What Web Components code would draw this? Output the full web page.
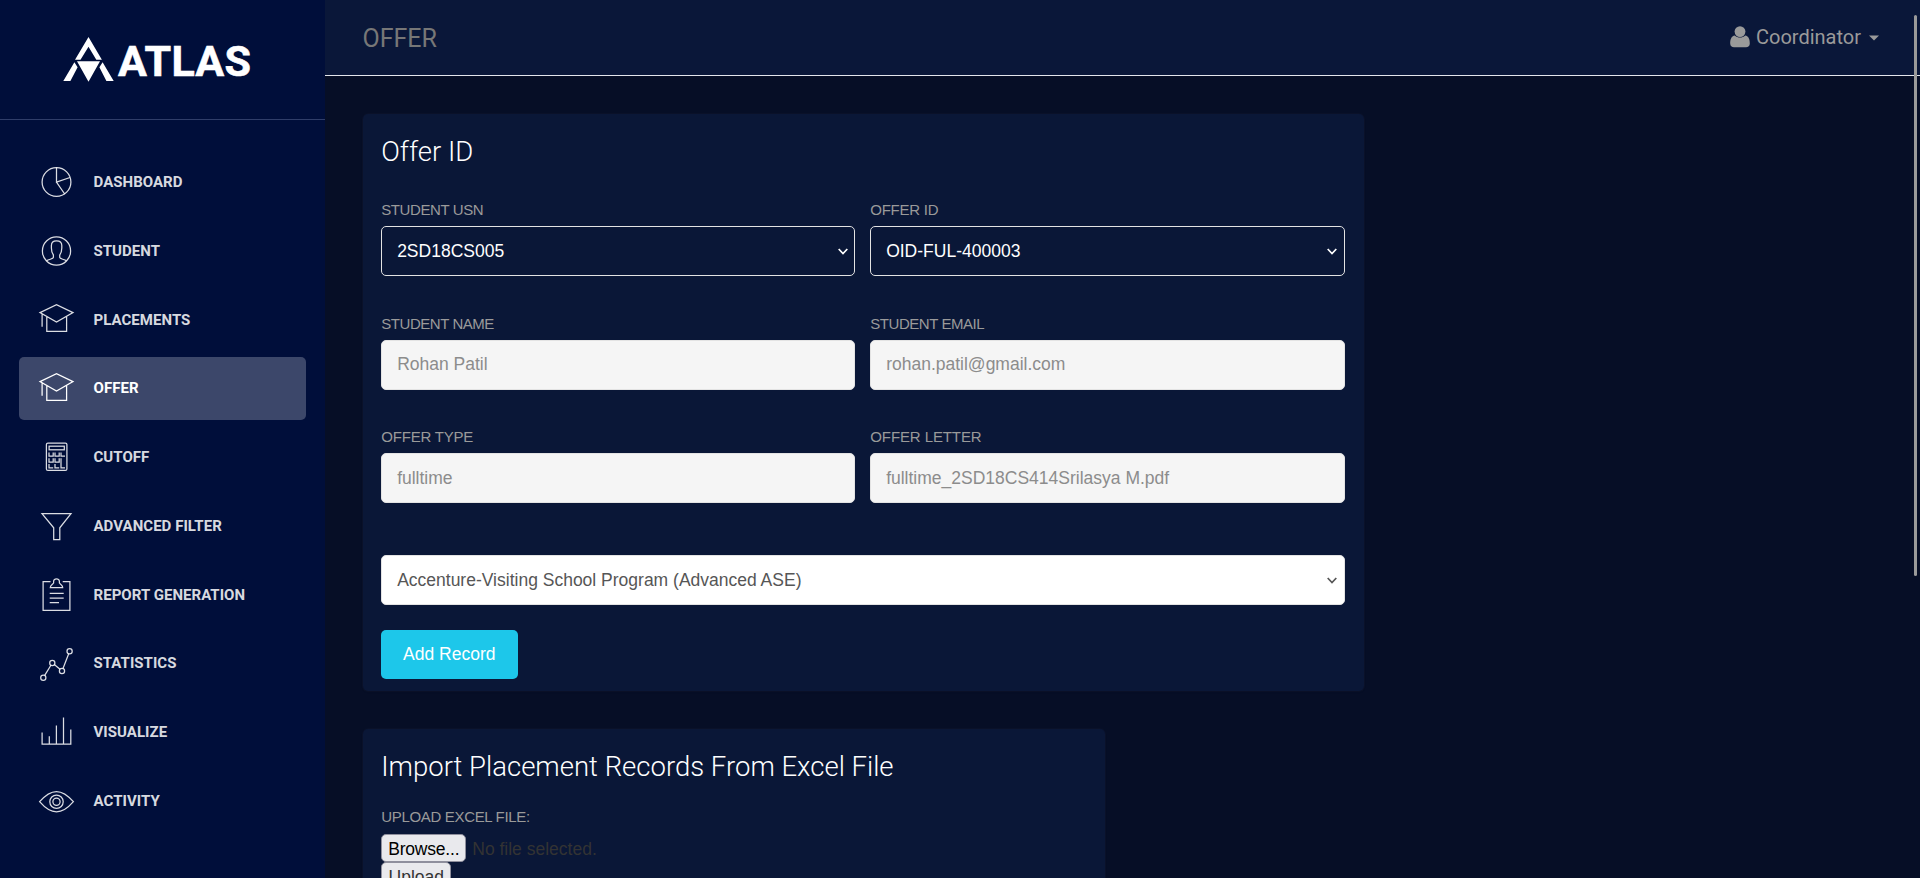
<!DOCTYPE html>
<html lang="en">
<head>
<meta charset="utf-8">
<title>Atlas - Offer</title>
<style>
html,body{margin:0;height:100%;overflow:hidden;background:#060e26}
body{font-family:Roboto,"Liberation Sans",sans-serif;font-size:17.5px;color:#333}
</style>
</head>
<body>
<atlas-app></atlas-app>
<script>
const define = (name, html, setup) => customElements.define(name, class extends HTMLElement {
  constructor() {
    super();
    const t = document.createElement('template');
    t.innerHTML = html;
    this.attachShadow({mode: 'open'}).append(t.content.cloneNode(true));
  }
  connectedCallback() { if (setup) setup(this, this.shadowRoot); }
});

const cap = '<path d="M2 10.6 18.5 2.7 35 10.6 18.5 20Z M4.1 11.6V24.8 M8.8 14.2V29.3H28.6V14.2"/>';
const icons = {
  pie: '<circle cx="18.5" cy="18" r="14.4"/><path d="M18.5 3.6V18.2L32 13.5 M18.5 18.2 26.7 30"/>',
  user: '<circle cx="18.5" cy="18" r="14.1"/><path d="M8.5 27.8C11 26 15.3 26.2 15.4 24.4V22C13.8 20 13.4 17.4 13.4 15V12.5C13.4 9.4 15.3 7.9 18.5 7.9S23.8 9.4 23.8 12.5V15C23.8 17.4 23.2 20 21.7 22V24.4C21.8 26.2 26 26 28.5 27.8"/>',
  cap,
  calc: '<rect x="8.4" y="4" width="20.5" height="27.4" rx="1.5"/><rect x="11.1" y="7.2" width="15.2" height="3.6"/><path d="M11 13.5V17.2H15.2V13.5 M17 13.5V17.2H21.2V13.5 M23 13.5V17.2H27 M11 19.3V23H15.2V19.3 M17 19.3V23H21.2V19.3 M11 25V28.8H15.2 M17 25V28.8H21.2 M23 19.3V28.8H27"/>',
  funnel: '<path d="M4 5.6H33L21.8 19.8V31.5H15.7V19.8Z"/>',
  clip: '<path d="M12.5 4.7H5.1V33.3H31.9V4.7H24.7 M12.3 10.5H24.7C24.7 8 22.5 7.7 21.4 6V4.6C21.4 1 15.6 1 15.6 4.6V6C14.5 7.7 12.3 8 12.3 10.5Z M11.7 16.4H25.7 M11.7 21H25.7 M11.7 25.6H21"/>',
  line: '<circle cx="5.3" cy="31.7" r="2.6"/><circle cx="14.3" cy="16.9" r="2.6"/><circle cx="24" cy="24.9" r="2.6"/><circle cx="31.6" cy="5.3" r="2.6"/><path d="M6.7 29.4 12.9 19.2 M16.3 18.6 22 23.2 M25 22.4 30.7 7.8"/>',
  bars: '<path d="M4.1 18.4V30H32.8V15.6 M11.3 22.2V30 M18.4 11.5V30 M25.5 3.5V30"/>',
  eye: '<path d="M1.6 18.7C8 11.3 13 8.5 18.5 8.5S29 11.3 35.4 18.7C29 26.1 24 28.9 18.5 28.9S8 26.1 1.6 18.7Z"/><circle cx="18.5" cy="18.7" r="6.7"/><circle cx="18.5" cy="18.7" r="3.6"/>'
};

define('atlas-logo', `<style>
:host{display:flex;height:120px;box-sizing:border-box;padding-left:63px;padding-top:37px;border-bottom:1px solid #2f3d69;align-items:flex-start;color:#fff}
svg{width:51px;height:46px;flex:none}
span{font:700 43px/48px Roboto,sans-serif;margin-left:4px;letter-spacing:.25px;-webkit-text-stroke:.6px #fff}
</style><svg viewBox="0 0 51 46" fill="#fff"><path fill-rule="evenodd" d="M25.5 0 38.9 22.7H33.3L25.5 9.8 17.5 22.7H12Z M14 24.3H37L25.5 44.8Z M11.4 25.2 14.6 30.2 7.4 43.9H.3Z M39.6 25.2 36.4 30.2 43.4 43.9H50.7Z"/></svg><span>ATLAS</span>`);

define('nav-item', `<style>
:host{display:flex;align-items:center;box-sizing:border-box;height:62.5px;margin:6.25px 18.75px 0;padding:1.8px 0 0 18.75px;border-radius:5px;color:rgba(255,255,255,.86);font:700 15px/37.5px Roboto,sans-serif;letter-spacing:.04px;text-transform:uppercase}
:host([active]){background:#3c476a;color:#fff}
svg{width:37px;height:37px;margin-right:19px;fill:none;stroke:currentColor;stroke-width:1.25}
</style><svg viewBox="0 0 37 37"></svg><slot></slot>`, (el, r) => r.querySelector('svg').innerHTML = icons[el.getAttribute('icon')]);

define('side-bar', `<style>
:host{display:block;width:325px;flex:none;background:#000e3a}
nav{display:block;padding-top:24.6px}
</style><atlas-logo></atlas-logo><nav>
<nav-item icon="pie">Dashboard</nav-item><nav-item icon="user">Student</nav-item><nav-item icon="cap">Placements</nav-item><nav-item icon="cap" active>Offer</nav-item><nav-item icon="calc">Cutoff</nav-item><nav-item icon="funnel">Advanced Filter</nav-item><nav-item icon="clip">Report Generation</nav-item><nav-item icon="line">Statistics</nav-item><nav-item icon="bars">Visualize</nav-item><nav-item icon="eye">Activity</nav-item></nav>`);

define('top-bar', `<style>
:host{display:flex;justify-content:space-between;align-items:center;box-sizing:border-box;height:76px;padding:0 41px 0 37.5px;border-bottom:1px solid #e3e5ec;background:#0a1739}
.t{font:400 25px/30px Roboto,sans-serif;color:#777;padding-top:2px}
.u{display:flex;align-items:center;font:400 20px/30px Roboto,sans-serif;color:#9a9a9a;margin-top:-2px}
.p{width:20px;height:22px;margin-right:6px;fill:#9a9a9a}
.c{width:10px;height:6px;margin-left:8px;margin-top:3px;fill:#9a9a9a}
</style><span class="t">OFFER</span><div class="u"><svg class="p" viewBox="0 0 20 22"><circle cx="10" cy="5.6" r="5.4"/><path d="M4.9 9.5C1 10 .2 14 .2 17.5.2 20 1.8 21.3 4 21.3H16C18.2 21.3 19.8 20 19.8 17.5 19.8 14 19 10 15.1 9.5 12.5 12.2 7.5 12.2 4.9 9.5Z"/></svg><span>Coordinator</span><svg class="c" viewBox="0 0 10 6"><path d="M0 .5H10L5 5.5Z"/></svg></div>`);

define('form-field', `<style>
:host{display:block;min-width:0}
label{display:block;font:400 15px/21px "Liberation Sans",Arial,sans-serif;color:#9a9a9a;text-transform:uppercase;margin-bottom:6px;height:21px;letter-spacing:var(--track,-.4px)}
:host([nolabel]) label{display:none}
.b{display:flex;align-items:center;justify-content:space-between;box-sizing:border-box;height:50px;padding:0 6.5px 0 14.9px;border:1px solid #e3e3e3;border-radius:5px;background:#f5f5f5;color:#8c8c8c;font:400 17.5px/25px "Liberation Sans",Arial,sans-serif}
:host([dark]) .b{background:transparent;color:#fff}
:host([light]) .b{background:#fff;color:#565656}
svg{display:none;width:10px;height:7px;fill:none;stroke:currentColor;stroke-width:1.7}
:host([dark]) svg,:host([light]) svg{display:block}
</style><label></label><div class="b"><slot></slot><svg viewBox="0 0 10 7"><path d="M.7 1 5 5.5 9.3 1"/></svg></div>`, (el, r) => r.querySelector('label').textContent = el.getAttribute('label') || '');

define('form-card', `<style>
:host{display:block;box-sizing:border-box;background:#0a1737;border-radius:5px;box-shadow:0 0 0 1px rgba(20,27,50,.35),0 1px 2px rgba(0,0,0,.1);padding:18.75px}
h4{margin:0;font:300 27.5px/37px Roboto,sans-serif;color:#fff}
</style><h4></h4><slot></slot>`, (el, r) => r.querySelector('h4').textContent = el.getAttribute('heading'));

define('action-button', `<style>
:host{display:flex;width:137px;height:49px;align-items:center;justify-content:center;border-radius:5px;background:#1dc7ea;color:#fff;font:400 17.5px/25px "Liberation Sans",Arial,sans-serif}
span{margin-right:1px}
</style><span><slot></slot></span>`);

define('file-upload', `<style>
:host{display:block;font:400 17.5px/25px "Liberation Sans",Arial,sans-serif;color:#333}
.l{font-size:15px;line-height:21px;color:#9a9a9a;letter-spacing:-.33px;margin-bottom:7px}
.r{display:flex;align-items:center;gap:6px}
.r span{padding-top:3px}
.k{box-sizing:border-box;height:28px;padding-top:3px;border:1px solid #8f8f9d;border-radius:5px;background:#e9e9ed;display:flex;align-items:center;justify-content:center;flex:none}
.a{width:85px;color:#000;letter-spacing:-.2px}.z{width:70px;color:#333}
</style><div class="l">UPLOAD EXCEL FILE:</div><div class="r"><div class="k a">Browse...</div><span>No file selected.</span></div><div class="k z">Upload</div>`);

define('scroll-bar', `<style>
:host{position:absolute;right:3px;top:15px;width:3px;height:561px;background:#9a9a9a;border-radius:2px}
</style>`);

define('atlas-app', `<style>
:host{display:flex;height:878px;overflow:hidden;position:relative}
main{flex:1;min-width:0;display:flex;flex-direction:column}
.content{padding:38px 37.5px;flex:1;min-height:0;background:#060e26}
.one{width:1001px;height:577px}
.two{width:742px;height:300px;margin-top:38px}
.g{display:grid;grid-template-columns:474px 474.5px;column-gap:15px;row-gap:36.6px;margin-top:29.3px}
.w{margin-top:52px}
.btn{margin-top:25px}
.up{margin-top:21px}
</style><side-bar></side-bar><main><top-bar></top-bar><div class="content">
<form-card class="one" heading="Offer ID"><div class="g">
<form-field label="Student USN" dark>2SD18CS005</form-field><form-field label="Offer ID" style="--track:-.25px" dark>OID-FUL-400003</form-field>
<form-field label="Student Name" style="--track:-.45px">Rohan Patil</form-field><form-field label="Student Email" style="--track:-.45px">rohan.patil@gmail.com</form-field>
<form-field label="Offer Type" style="--track:-.2px">fulltime</form-field><form-field label="Offer Letter" style="--track:-.1px">fulltime_2SD18CS414Srilasya M.pdf</form-field></div>
<form-field class="w" nolabel light>Accenture-Visiting School Program (Advanced ASE)</form-field>
<action-button class="btn">Add Record</action-button></form-card>
<form-card class="two" heading="Import Placement Records From Excel File"><file-upload class="up"></file-upload></form-card>
</div></main><scroll-bar></scroll-bar>`);
</script>
</body>
</html>
